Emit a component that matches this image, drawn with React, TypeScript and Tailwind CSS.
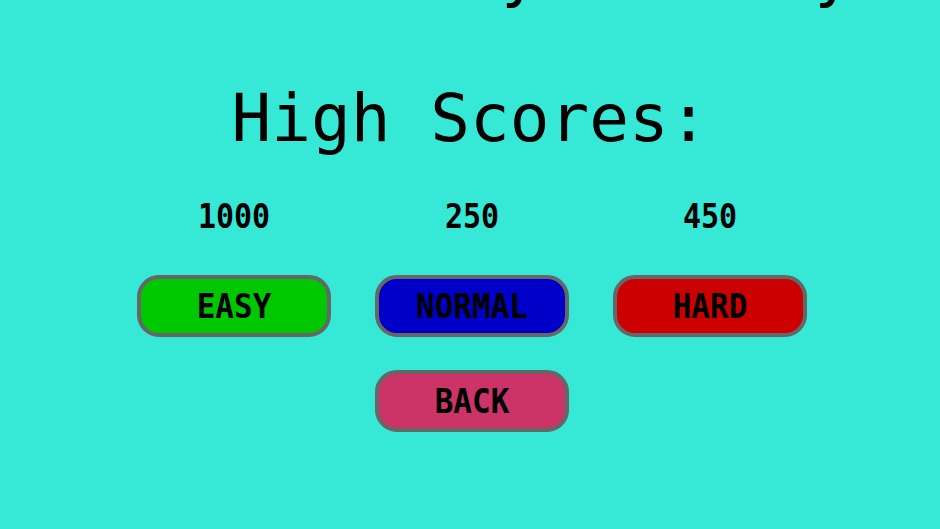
const modes = [
  { score: '1000', label: 'EASY', color: 'bg-[#00c800]' },
  { score: '250', label: 'NORMAL', color: 'bg-[#0000c8]' },
  { score: '450', label: 'HARD', color: 'bg-[#cc0000]' },
]

export default function App() {
  return (
    <div className="h-[529px] w-[940px] overflow-hidden bg-[#35e9d6] font-['DejaVu_Sans_Mono',monospace] text-black">
      <div className="flex flex-col items-center">
        {/* title sits above the fold, only the descenders peek in */}
        <h1 className="-mt-[63px] h-[70px] whitespace-pre pr-[16px] text-[65px] leading-[70px]">
          Simon Memory Fantasy
        </h1>
        <h2 className="mt-[77px] h-[70px] text-[66px] leading-[70px]">High Scores:</h2>
        <div className="ml-[4px] mt-[48px] flex gap-[44px]">
          {modes.map((m) => (
            <div key={m.label} className="flex w-[194px] flex-col items-center">
              <span className="inline-block h-[30px] scale-y-110 text-[30px] font-bold leading-[30px]">
                {m.score}
              </span>
              <button
                className={`mt-[43px] h-[62px] w-[194px] rounded-[22px] border-4 border-[#666666] ${m.color} text-[31px] font-bold`}
              >
                <span className="inline-block scale-y-110">{m.label}</span>
              </button>
            </div>
          ))}
        </div>
        <button className="ml-[4px] mt-[33px] h-[62px] w-[194px] rounded-[22px] border-4 border-[#666666] bg-[#cc3366] text-[31px] font-bold">
          <span className="inline-block scale-y-110">BACK</span>
        </button>
      </div>
    </div>
  )
}
